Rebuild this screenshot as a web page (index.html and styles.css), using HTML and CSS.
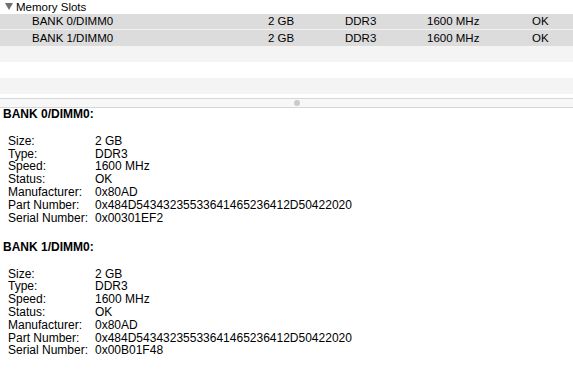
FILE: index.html
```html
<!DOCTYPE html>
<html>
<head>
    <link rel="stylesheet" href="styles.css">
</head>
<body>
<div class="slots">
    <div class="group-row">
        <svg class="disclosure" width="8" height="7" viewBox="0 0 8 7"><polygon points="0,0 8,0 4,7" fill="#707070"/></svg>
        <span>Memory Slots</span>
    </div>
    <div class="slot-row selected first">
        <span>BANK 0/DIMM0</span><span>2 GB</span><span>DDR3</span><span>1600 MHz</span><span>OK</span>
    </div>
    <div class="slot-row selected">
        <span>BANK 1/DIMM0</span><span>2 GB</span><span>DDR3</span><span>1600 MHz</span><span>OK</span>
    </div>
    <div class="slot-row stripe"></div>
    <div class="slot-row"></div>
    <div class="slot-row stripe"></div>
</div>

<div class="splitter"><span class="grip"></span></div>

<div class="details">
    <div class="bank">
        <div class="bank-title">BANK 0/DIMM0:</div>
        <div class="props">
            <span>Size:</span><span>2 GB</span>
            <span>Type:</span><span>DDR3</span>
            <span>Speed:</span><span>1600 MHz</span>
            <span>Status:</span><span>OK</span>
            <span>Manufacturer:</span><span>0x80AD</span>
            <span>Part Number:</span><span>0x484D54343235533641465236412D50422020</span>
            <span>Serial Number:</span><span>0x00301EF2</span>
        </div>
    </div>
    <div class="bank">
        <div class="bank-title">BANK 1/DIMM0:</div>
        <div class="props">
            <span>Size:</span><span>2 GB</span>
            <span>Type:</span><span>DDR3</span>
            <span>Speed:</span><span>1600 MHz</span>
            <span>Status:</span><span>OK</span>
            <span>Manufacturer:</span><span>0x80AD</span>
            <span>Part Number:</span><span>0x484D54343235533641465236412D50422020</span>
            <span>Serial Number:</span><span>0x00B01F48</span>
        </div>
    </div>
</div>
</body>
</html>
```

FILE: styles.css
```css
body {
    margin: 0;
    background: #fff;
    color: #000;
    font-family: "Liberation Sans", Arial, sans-serif;
}

.slots {
    height: 98px;
    font-size: 11.5px;
}

.group-row {
    display: flex;
    align-items: center;
    height: 14px;
    line-height: 13px;
    padding-left: 5px;
    gap: 3px;
}

.disclosure {
    margin-top: -1px;
}

.slot-row {
    display: grid;
    grid-template-columns: 236px 77px 82px 105px 1fr;
    height: 16px;
    line-height: 16px;
    padding-left: 32px;
    box-sizing: border-box;
}

.selected {
    background: #dcdcdc;
}

.selected.first {
    border-bottom: 1px solid #f2f2f2;
    line-height: 15px;
}

.stripe {
    background: #f4f4f4;
}

.splitter {
    height: 8px;
    background: #f7f7f7;
    border-top: 1px solid #d6d6d6;
    border-bottom: 1px solid #d6d6d6;
    display: flex;
    align-items: center;
    padding-left: 294px;
}

.grip {
    width: 6px;
    height: 6px;
    border-radius: 50%;
    background: #cacaca;
}

.details {
    font-size: 12px;
    line-height: 12.8px;
}

.bank {
    padding-left: 3px;
    margin-bottom: 16.5px;
}

.bank-title {
    font-weight: bold;
    margin-bottom: 14px;
}

.props {
    display: grid;
    grid-template-columns: 87px 1fr;
    padding-left: 5px;
}
```
